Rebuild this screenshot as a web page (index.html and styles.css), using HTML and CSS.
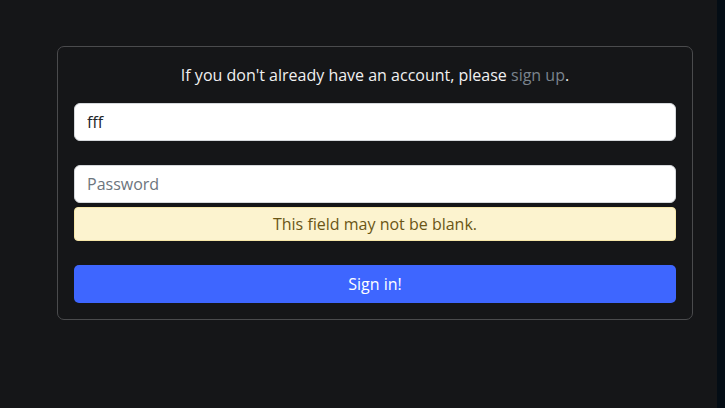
FILE: index.html
```html
<!DOCTYPE html>
<html lang="en">
<head>
<meta charset="utf-8">
<title>Sign in</title>
<link rel="stylesheet" href="styles.css">
</head>
<body>
<div class="page">
  <main class="main">
    <form class="card">
      <p class="intro">If you don't already have an account, please <a href="#" class="link">sign up</a>.</p>
      <input class="field" type="text" value="fff">
      <div class="group">
        <input class="field" type="password" placeholder="Password">
        <div class="alert">This field may not be blank.</div>
      </div>
      <button class="btn" type="button">Sign in!</button>
    </form>
  </main>
  <div class="strip"></div>
</div>
</body>
</html>
```
FILE: styles.css
```css
* { box-sizing: border-box; }
html, body { margin: 0; height: 100%; }
body {
  background: #151618;
  font-family: "Open Sans", "Noto Sans", sans-serif;
  font-size: 16px;
  line-height: 24px;
  color: #eeeeee;
}
.page { display: flex; height: 100%; }
.main { flex: 1; padding: 46px 24px 0 57px; }
.strip { width: 8px; background: #040d15; }
.card {
  border: 1px solid #4a4b4d;
  border-radius: 7px;
  padding: 16px;
  display: flex;
  flex-direction: column;
}
.intro { margin: 0 0 16px; text-align: center; color: #f0f0f0; }
.link { color: #7b848d; text-decoration: none; }
.field {
  display: block;
  width: 100%;
  height: 38px;
  padding: 6px 12px;
  font: inherit;
  color: #212529;
  background: #fff;
  border: 1px solid #d5d8db;
  border-radius: 6px;
  outline: none;
}
.field::placeholder { color: #6c757d; }
.group { margin-top: 24px; display: flex; flex-direction: column; gap: 4px; }
.alert {
  height: 34px;
  padding: 4px 12px;
  text-align: center;
  background: #fcf3cf;
  border: 1px solid #f6e6a8;
  border-radius: 4px;
  color: #6a5616;
}
.btn {
  margin-top: 24px;
  height: 38px;
  border: 0;
  border-radius: 5px;
  background: #3e66ff;
  color: #fff;
  font: inherit;
}
```
